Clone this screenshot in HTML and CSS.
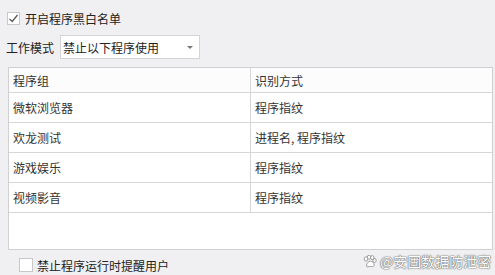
FILE: index.html
```html
<!DOCTYPE html>
<html lang="zh-CN">
<head>
    <meta charset="UTF-8">
    <title>程序黑白名单</title>
    <link rel="stylesheet" href="styles.css">
</head>
<body>
    <div class="panel">
        <label class="check-row top">
            <span class="box checked">
                <svg width="11" height="11" viewBox="0 0 11 11"><path d="M1.5 5.8 L4.2 8.5 L9.5 2" fill="none" stroke="#555" stroke-width="1.2"/></svg>
            </span>
            <span>开启程序黑白名单</span>
        </label>
        <div class="mode-row">
            <span class="mode-label">工作模式</span>
            <div class="select">
                <span>禁止以下程序使用</span>
                <span class="arrow"></span>
            </div>
        </div>
        <div class="grid">
            <table class="list">
                <tr class="head">
                    <td class="c1">程序组</td>
                    <td>识别方式</td>
                </tr>
                <tr>
                    <td class="c1">微软浏览器</td>
                    <td>程序指纹</td>
                </tr>
                <tr>
                    <td class="c1">欢龙测试</td>
                    <td>进程名, 程序指纹</td>
                </tr>
                <tr>
                    <td class="c1">游戏娱乐</td>
                    <td>程序指纹</td>
                </tr>
                <tr>
                    <td class="c1">视频影音</td>
                    <td>程序指纹</td>
                </tr>
            </table>
        </div>
        <label class="check-row bottom">
            <span class="box"></span>
            <span>禁止程序运行时提醒用户</span>
        </label>
        <div class="watermark">
            <svg width="14" height="13" viewBox="0 0 14 13">
                <g fill="#fff" stroke="#888" stroke-width="0.8">
                    <ellipse cx="3" cy="4" rx="1.8" ry="2.2"/>
                    <ellipse cx="6" cy="2.2" rx="1.7" ry="2"/>
                    <ellipse cx="9.3" cy="2.6" rx="1.7" ry="2"/>
                    <ellipse cx="11.6" cy="5.4" rx="1.6" ry="2"/>
                    <path d="M3.5 11 C3.5 7.5 6 6.2 7.5 6.2 C9.5 6.2 11.5 8 11 10.5 C10.5 12.3 8.5 11.4 7.3 11.4 C6 11.4 3.6 12.8 3.5 11 Z"/>
                </g>
            </svg>
            <span>@安固数据防泄密</span>
        </div>
    </div>
</body>
</html>
```

FILE: styles.css
```css
body {
    margin: 0;
    background-color: #f0f0f2;
    font-family: "Noto Sans CJK SC", "Liberation Sans", sans-serif;
    font-size: 12px;
    color: #222;
}
.panel {
    position: relative;
    width: 495px;
    height: 275px;
    overflow: hidden;
}
.check-row {
    display: flex;
    align-items: center;
    gap: 5px;
    height: 14px;
}
.check-row.top {
    padding: 11px 0 0 7px;
}
.check-row.bottom {
    padding: 8px 0 0 19px;
    gap: 4px;
}
.box {
    width: 11px;
    height: 11px;
    border: 1px solid #c8c8c8;
    background-color: #fff;
    display: flex;
    align-items: center;
    justify-content: center;
}
.check-row.bottom .box {
    width: 12px;
    height: 12px;
}
.mode-row {
    display: flex;
    align-items: center;
    gap: 6px;
    margin-top: 10px;
    padding-left: 6px;
}
.select {
    width: 130px;
    height: 22px;
    border: 1px solid #d4d4d4;
    background-color: #fff;
    display: flex;
    align-items: center;
    justify-content: space-between;
    padding: 0 6px 0 2px;
}
.arrow {
    width: 0;
    height: 0;
    border-left: 3px solid transparent;
    border-right: 3px solid transparent;
    border-top: 3px solid #777;
}
.grid {
    margin: 8px 2px 0 8px;
    height: 181px;
    background-color: #fff;
    border: 1px solid #d0d0d0;
}
.list {
    width: 100%;
    border-collapse: collapse;
    color: #333;
}
.list td {
    height: 29px;
    padding: 0 0 0 4px;
    border-bottom: 1px solid #d6d6d6;
    vertical-align: middle;
}
.list .c1 {
    width: 237px;
    border-right: 1px solid #d6d6d6;
}
.list tr.head td {
    height: 24px;
    background-color: #fcfcfd;
}
.watermark {
    position: absolute;
    left: 363px;
    top: 251px;
    display: flex;
    align-items: center;
    gap: 3px;
    font-size: 14px;
    color: #fff;
    text-shadow: 0 0 1px #666, 0 0 1px #666, 0 0 2px #888;
}
```
